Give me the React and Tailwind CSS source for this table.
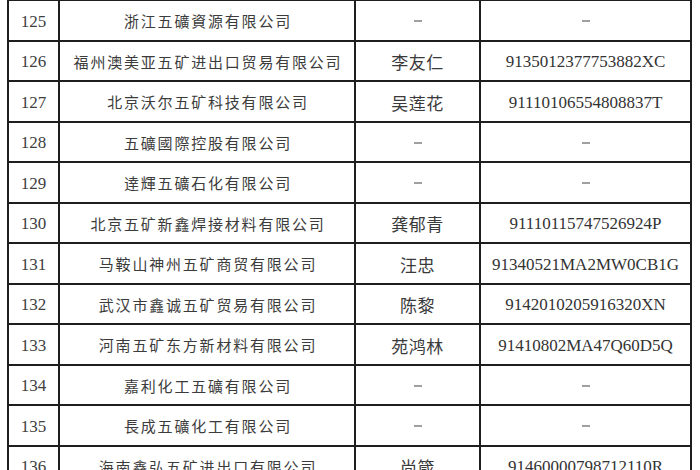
import React from 'react';

const rows = [
  { no: 125, company: '浙江五礦資源有限公司', person: '', code: '' },
  { no: 126, company: '福州澳美亚五矿进出口贸易有限公司', person: '李友仁', code: '9135012377753882XC' },
  { no: 127, company: '北京沃尔五矿科技有限公司', person: '吴莲花', code: '91110106554808837T' },
  { no: 128, company: '五礦國際控股有限公司', person: '', code: '' },
  { no: 129, company: '逹輝五礦石化有限公司', person: '', code: '' },
  { no: 130, company: '北京五矿新鑫焊接材料有限公司', person: '龚郁青', code: '91110115747526924P' },
  { no: 131, company: '马鞍山神州五矿商贸有限公司', person: '汪忠', code: '91340521MA2MW0CB1G' },
  { no: 132, company: '武汉市鑫诚五矿贸易有限公司', person: '陈黎', code: '9142010205916320XN' },
  { no: 133, company: '河南五矿东方新材料有限公司', person: '苑鸿林', code: '91410802MA47Q60D5Q' },
  { no: 134, company: '嘉利化工五礦有限公司', person: '', code: '' },
  { no: 135, company: '長成五礦化工有限公司', person: '', code: '' },
  { no: 136, company: '海南鑫弘五矿进出口有限公司', person: '尚箴', code: '91460000798712110R' },
];

const serif = { fontFamily: '"Liberation Serif", "Noto Sans CJK SC", serif' };
const cjk = { fontFamily: '"Noto Sans CJK SC", "Noto Sans CJK TC", sans-serif' };

// empty cells show a short grey dash
const Dash = () => <span className="block w-[8px] h-[2px] bg-[#a0a0a0]" />;

const App = () => {
  return (
    <div className="w-[700px] h-[470px] overflow-hidden bg-white">
      <div className="ml-[7px] -mt-[1px] w-[685px] border-l-2 border-r-2 border-t-2 border-[#1e1e1e]">
        {rows.map((row) => (
          <div key={row.no} className="flex h-[40.5px] border-b-2 border-[#1e1e1e] box-border">
            <div
              className="w-[51px] shrink-0 border-r-2 border-[#1e1e1e] flex items-center justify-center pt-[2px] text-[17px] text-[#404040]"
              style={serif}
            >
              {row.no}
            </div>
            <div
              className="w-[296px] shrink-0 border-r-2 border-[#1e1e1e] flex items-center justify-center pt-[2px] pl-[2px] text-[15px] tracking-[1.8px] text-[#3c3c3c]"
              style={cjk}
            >
              {row.company}
            </div>
            <div
              className="w-[125px] shrink-0 border-r-2 border-[#1e1e1e] flex items-center justify-center pt-[2px] text-[17px] tracking-[0.5px] text-[#3a3a3a]"
              style={cjk}
            >
              {row.person ? row.person : <Dash />}
            </div>
            <div
              className="flex-1 flex items-center justify-center pt-[2px] text-[17px] text-[#333333]"
              style={serif}
            >
              {row.code ? row.code : <Dash />}
            </div>
          </div>
        ))}
      </div>
    </div>
  );
};

export default App;
